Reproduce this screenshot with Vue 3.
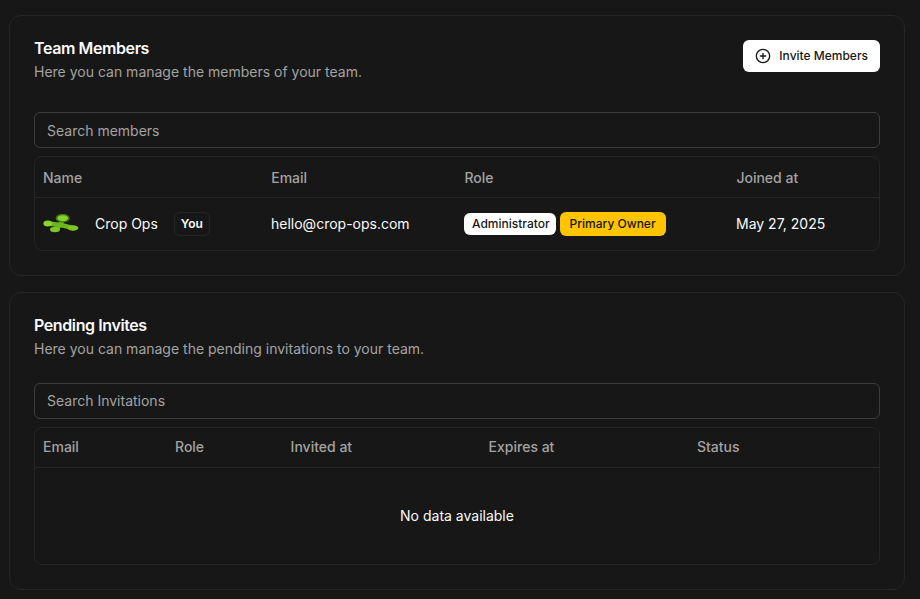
<script setup>
const cols1 = [
  { label: 'Name', w: '228.2px' },
  { label: 'Email', w: '193.2px' },
  { label: 'Role', w: '272px' },
  { label: 'Joined at', w: 'auto' }
]
const cols2 = [
  { label: 'Email', w: '132px' },
  { label: 'Role', w: '115.6px' },
  { label: 'Invited at', w: '198px' },
  { label: 'Expires at', w: '208.4px' },
  { label: 'Status', w: 'auto' }
]
</script>

<template>
  <div class="page">
    <section class="card first">
      <div class="head">
        <div>
          <h2>Team Members</h2>
          <p>Here you can manage the members of your team.</p>
        </div>
        <button class="invite">
          <svg width="16" height="16" viewBox="0 0 24 24" fill="none" stroke="currentColor" stroke-width="2" stroke-linecap="round" stroke-linejoin="round">
            <circle cx="12" cy="12" r="10" />
            <path d="M8 12h8M12 8v8" />
          </svg>
          Invite Members
        </button>
      </div>
      <div class="search s1">Search members</div>
      <div class="table">
        <div class="row header h1">
          <div v-for="c in cols1" :key="c.label" class="cell" :style="{ width: c.w }">{{ c.label }}</div>
        </div>
        <div class="row body">
          <div class="cell name" style="width: 228px">
            <svg class="logo" width="36" height="20" viewBox="0 0 36 20">
              <path d="M5 9.5 L18 11 L30 14 M12 15 L18 11 L19.5 4" stroke="#6bb51f" stroke-width="4.5" fill="none" stroke-linecap="round" />
              <ellipse cx="19.7" cy="4.2" rx="7" ry="4.4" fill="#3f7a16" />
              <ellipse cx="19.7" cy="4.2" rx="5.3" ry="3" fill="#86cf2c" />
              <ellipse cx="4.8" cy="9.5" rx="4.4" ry="3" fill="#8ad42e" />
              <ellipse cx="30" cy="14" rx="5.4" ry="2.8" fill="#7cc527" />
              <ellipse cx="12" cy="15.5" rx="5" ry="2.8" fill="#7cc527" />
            </svg>
            <span>Crop Ops</span>
            <span class="you">You</span>
          </div>
          <div class="cell" style="width: 193px">hello@crop-ops.com</div>
          <div class="cell roles" style="width: 272px">
            <span class="badge white">Administrator</span>
            <span class="badge yellow">Primary Owner</span>
          </div>
          <div class="cell">May 27, 2025</div>
        </div>
      </div>
    </section>

    <section class="card second">
      <h2>Pending Invites</h2>
      <p>Here you can manage the pending invitations to your team.</p>
      <div class="search s2">Search Invitations</div>
      <div class="table">
        <div class="row header h2r">
          <div v-for="c in cols2" :key="c.label" class="cell" :style="{ width: c.w }">{{ c.label }}</div>
        </div>
        <div class="empty">No data available</div>
      </div>
    </section>
  </div>
</template>

<style>
html, body { margin: 0; background: #171717; }
</style>

<style scoped>
.page {
  width: 920px;
  height: 599px;
  overflow: hidden;
  box-sizing: border-box;
  padding: 15px 15px 0 9px;
  display: flex;
  flex-direction: column;
  gap: 16px;
  font-family: Inter, sans-serif;
  color: #fafafa;
  font-size: 14px;
  line-height: 20px;
}
.card {
  background: #171717;
  border: 1px solid #262626;
  border-radius: 12px;
  padding: 24px;
  box-sizing: border-box;
}
.first { height: 261px; }
.second { height: 298px; }
.head { display: flex; justify-content: space-between; }
h2 { margin: 0; font-size: 16px; line-height: 16px; font-weight: 600; color: #fafafa; letter-spacing: -0.4px; }
p { margin: 6px 0 0; font-size: 14px; line-height: 20px; color: #a3a3a3; }
.invite {
  display: flex; align-items: center; gap: 8px;
  height: 32px; padding: 0 12px;
  background: #fff; color: #171717;
  border: 0; border-radius: 6px;
  font: 500 12px/16px Inter, sans-serif;
}
.search {
  height: 36px; box-sizing: border-box;
  border: 1px solid #3d3d3d; border-radius: 6px;
  padding: 0 12px; display: flex; align-items: center;
  color: #a3a3a3; font-size: 14px;
}
.s1 { margin-top: 30px; padding-top: 2px; }
.s2 { margin-top: 24px; }
.table { margin-top: 8px; border: 1px solid #262626; border-radius: 8px; }
.row { display: flex; align-items: center; padding: 0 8px; }
.header { color: #a3a3a3; font-weight: 500; border-bottom: 1px solid #262626; box-sizing: border-box; }
.h1 { height: 41px; padding-top: 1px; }
.h2r { height: 40px; padding-bottom: 2px; }
.body { height: 52px; }
.cell { box-sizing: border-box; flex: none; }
.name { display: flex; align-items: center; }
.logo { margin-right: 16px; }
.you {
  margin-left: 16px; padding: 0 6px; height: 22px;
  display: inline-flex; align-items: center;
  border: 1px solid #262626; border-radius: 6px;
  font-size: 12px; line-height: 16px; font-weight: 600;
}
.roles { display: flex; align-items: center; gap: 4px; }
.badge {
  height: 22px; padding: 0 6px 0 8px; border-radius: 6px;
  display: inline-flex; align-items: center;
  font-size: 12px; line-height: 16px; font-weight: 500; color: #171717;
}
.white { background: #fff; }
.yellow { background: #fec400; padding: 0 10px; height: 24px; }
.empty { height: 96px; display: flex; align-items: center; justify-content: center; }
</style>
